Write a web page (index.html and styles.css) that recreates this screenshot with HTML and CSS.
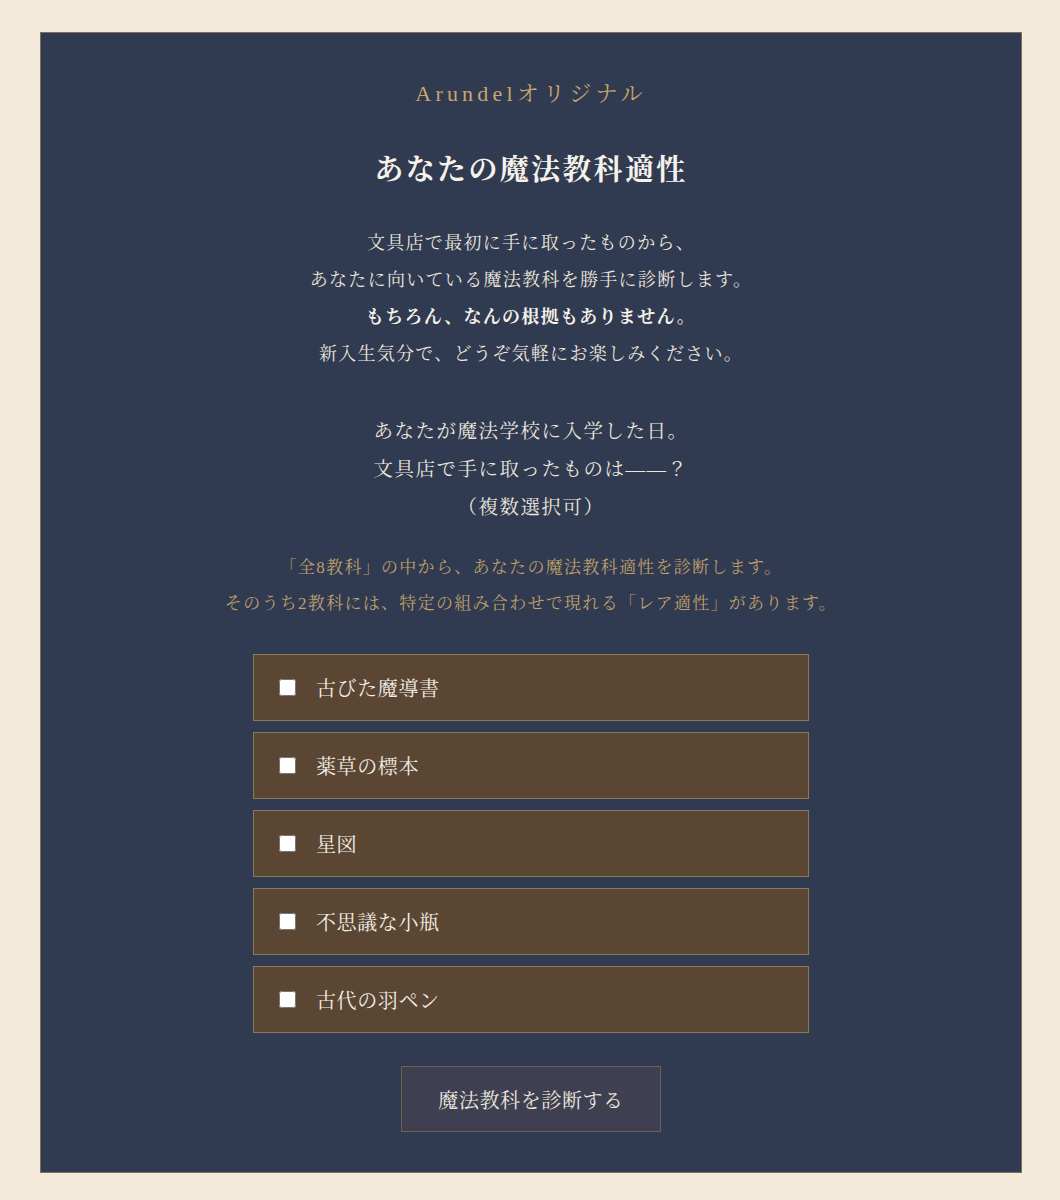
FILE: index.html
```html
<!DOCTYPE html>
<html lang="ja">
<head>
<meta charset="utf-8">
<title>あなたの魔法教科適性</title>
<link rel="stylesheet" href="styles.css">
</head>
<body>
<main class="card">
  <p class="brand">Arundelオリジナル</p>
  <h1 class="title">あなたの魔法教科適性</h1>
  <p class="intro">文具店で最初に手に取ったものから、<br>あなたに向いている魔法教科を勝手に診断します。<br><strong>もちろん、なんの根拠もありません。</strong><br>新入生気分で、どうぞ気軽にお楽しみください。</p>
  <p class="question">あなたが魔法学校に入学した日。<br>文具店で手に取ったものは——？<br>（複数選択可）</p>
  <p class="note">「全8教科」の中から、あなたの魔法教科適性を診断します。<br>そのうち2教科には、特定の組み合わせで現れる「レア適性」があります。</p>
  <form class="options">
    <label class="option"><input type="checkbox" class="check"><span>古びた魔導書</span></label>
    <label class="option"><input type="checkbox" class="check"><span>薬草の標本</span></label>
    <label class="option"><input type="checkbox" class="check"><span>星図</span></label>
    <label class="option"><input type="checkbox" class="check"><span>不思議な小瓶</span></label>
    <label class="option"><input type="checkbox" class="check"><span>古代の羽ペン</span></label>
    <button type="button" class="submit">魔法教科を診断する</button>
  </form>
</main>
</body>
</html>
```

FILE: styles.css
```css
html, body {
  margin: 0;
  padding: 0;
  background: #f3eadb;
}
body {
  padding: 32px 38px 28px 40px;
  font-family: "Liberation Serif", "Noto Serif CJK JP", "Noto Sans CJK JP", serif;
  color: #ece6dc;
}
.card {
  width: 982px;
  box-sizing: border-box;
  background: #303a50;
  border: 1px solid #7f6f56;
  padding: 46px 20px 40px;
  display: flex;
  flex-direction: column;
  align-items: center;
  text-align: center;
}
.brand {
  margin: 0;
  font-size: 22px;
  line-height: 30px;
  letter-spacing: 4.2px;
  color: #c9a66b;
}
.title {
  margin: 40px 0 0;
  font-size: 29px;
  line-height: 42px;
  letter-spacing: 2.3px;
  font-weight: bold;
  color: #f6f2ea;
}
.intro {
  margin: 34px 0 0;
  font-size: 18px;
  line-height: 37px;
  letter-spacing: 1.3px;
}
.intro strong {
  font-weight: bold;
  color: #f6f2ea;
}
.question {
  margin: 40px 0 0;
  font-size: 19.5px;
  line-height: 38px;
  letter-spacing: 1.5px;
}
.note {
  margin: 23px 0 0;
  font-size: 17px;
  line-height: 36px;
  letter-spacing: 1.3px;
  color: #bf9f6b;
}
.options {
  margin: 32px 0 0;
  display: flex;
  flex-direction: column;
  align-items: center;
  gap: 11px;
}
.option {
  width: 556px;
  height: 67px;
  box-sizing: border-box;
  display: flex;
  align-items: center;
  gap: 20px;
  padding: 0 0 0 25px;
  background: #5a4633;
  border: 1px solid #8b7a58;
  font-size: 20px;
  letter-spacing: 0.6px;
  color: #f3eee6;
  text-align: left;
  cursor: pointer;
}
.check {
  width: 17px;
  height: 17px;
  margin: 0;
  flex: none;
}
.submit {
  margin-top: 22px;
  width: 260px;
  height: 66px;
  background: #3e4052;
  border: 1px solid #6c6252;
  color: #ece6dc;
  font-family: inherit;
  font-size: 20px;
  letter-spacing: 0.6px;
  cursor: pointer;
}
```
